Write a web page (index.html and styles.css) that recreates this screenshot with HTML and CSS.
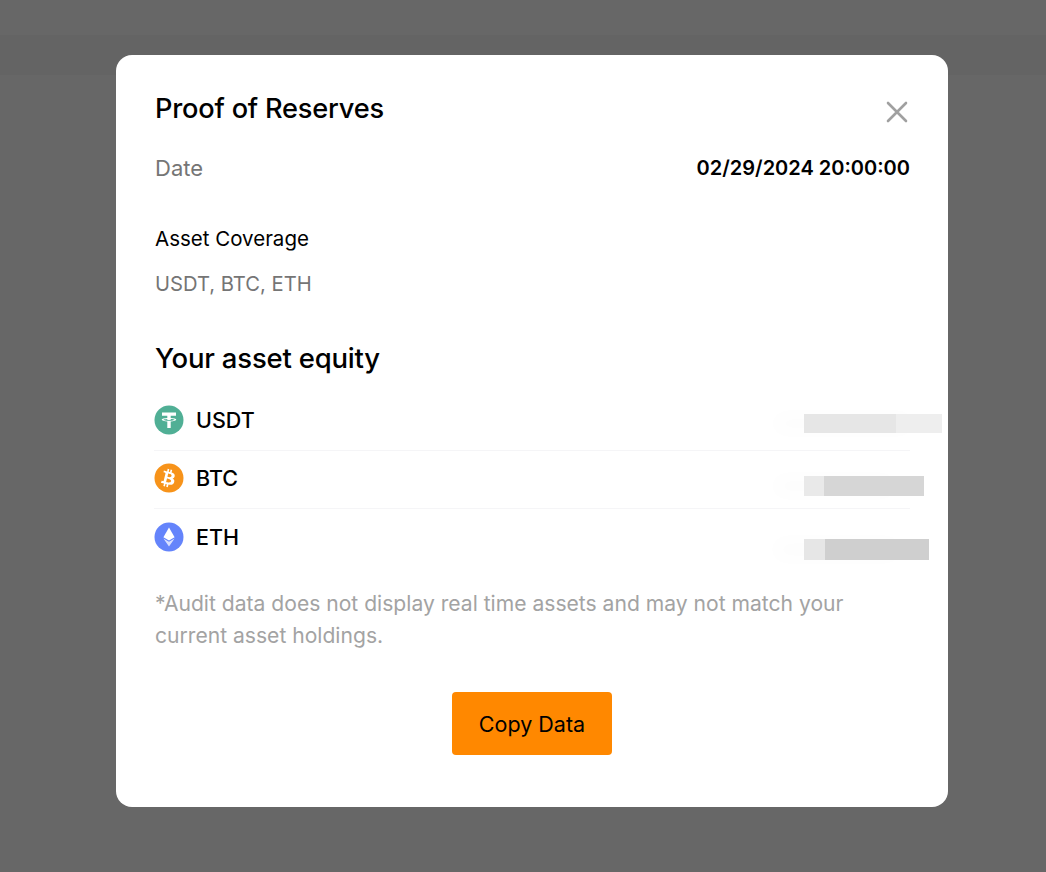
FILE: index.html
```html
<!DOCTYPE html>
<html lang="en">
<head>
<meta charset="utf-8">
<title>Proof of Reserves</title>
<link rel="stylesheet" href="styles.css">
</head>
<body>
<div class="page-band"></div>
<div class="overlay">
  <section class="modal">
    <header class="modal-head">
      <h1 class="title">Proof of Reserves</h1>
      <svg class="close" viewBox="0 0 22 22" width="22" height="22" aria-label="Close"><path d="M2 2 20 20M20 2 2 20"/></svg>
    </header>
    <div class="date-row">
      <span class="muted date-label">Date</span>
      <span class="date">02/29/2024 20:00:00</span>
    </div>
    <div class="coverage-label">Asset Coverage</div>
    <div class="muted coverage">USDT, BTC, ETH</div>
    <h2 class="subtitle">Your asset equity</h2>
    <div class="assets">
      <div class="asset">
        <svg class="coin" viewBox="0 0 30 30" width="30" height="30"><circle cx="15" cy="15" r="14.5" fill="#50af95"/><path fill="#fff" d="M8 7.5h14v3.3h-5.3v2.3c2.9.2 5.6.8 5.6 1.7s-2.7 1.5-5.6 1.7V23h-3.4v-6.5c-2.9-.2-5.6-.8-5.6-1.7s2.7-1.5 5.6-1.7v-2.3H8z"/><path fill="#50af95" d="M13.3 13.9c-2 .1-3.8.5-3.8.9s2.5 1 5.5 1 5.5-.5 5.5-1-1.8-.8-3.8-.9v1.2h-3.4z"/></svg>
        <span class="name">USDT</span>
        <div class="mosaic m-usdt"><i></i><i></i><i></i><i></i><i></i><i></i></div>
      </div>
      <div class="asset">
        <svg class="coin" viewBox="0 0 30 30" width="30" height="30"><circle cx="15" cy="15" r="14.5" fill="#f7931a"/><path fill="#fff" d="M20.7 13.1c.3-1.9-1.2-2.9-3.1-3.6l.6-2.6-1.6-.4-.6 2.5-1.3-.3.6-2.5-1.6-.4-.6 2.6-3.2-.8-.4 1.7 1.2.3c.7.2.8.6.8 1l-1.8 7.1c-.1.2-.3.6-.8.4l-1.2-.3-.8 1.9 3.1.8-.7 2.6 1.6.4.6-2.6 1.3.3-.6 2.6 1.6.4.7-2.6c2.7.5 4.8.3 5.6-2.1.7-2-.1-3.1-1.5-3.9 1.1-.2 1.9-1 2.1-2.5zm-3.7 5.2c-.5 2-3.8.9-4.9.6l.9-3.5c1.1.3 4.5.8 4 2.9zm.5-5.2c-.4 1.8-3.2.9-4.1.7l.8-3.2c.9.2 3.8.6 3.3 2.5z"/></svg>
        <span class="name">BTC</span>
        <div class="mosaic m-btc"><i></i><i></i><i></i><i></i><i></i><i></i></div>
      </div>
      <div class="asset">
        <svg class="coin" viewBox="0 0 30 30" width="30" height="30"><circle cx="15" cy="15" r="14.5" fill="#6484fb"/><path fill="#fff" d="M15 5.5l-5.6 9.7 5.6 3.3 5.6-3.3z"/><path fill="#fff" d="M9.4 16.4 15 24.5l5.6-8.1-5.6 3.3z" opacity=".75"/></svg>
        <span class="name">ETH</span>
        <div class="mosaic m-eth"><i></i><i></i><i></i><i></i><i></i><i></i></div>
      </div>
    </div>
    <p class="note">*Audit data does not display real time assets and may not match your current asset holdings.</p>
    <div class="actions"><button class="copy" type="button">Copy Data</button></div>
  </section>
</div>
</body>
</html>
```

FILE: styles.css
```css
* { box-sizing: border-box; }
html, body { margin: 0; height: 100%; }
body {
  background: #676767;
  font-family: Inter, "Noto Sans", sans-serif;
  color: #000;
  overflow: hidden;
}
.page-band { position: absolute; left: 0; right: 0; top: 35px; height: 40px; background: #646464; }
.overlay {
  position: fixed;
  inset: 0;
  display: flex;
  justify-content: center;
  align-items: flex-start;
  padding: 55px 0 0 18px;
}
.modal {
  width: 832px;
  height: 752px;
  background: #fff;
  border-radius: 16px;
  padding: 0 38px;
  display: flex;
  flex-direction: column;
}
.modal-head {
  display: flex;
  justify-content: space-between;
  align-items: flex-start;
  padding-top: 36px;
  height: 95px;
}
.title { margin: 0 0 0 1px; font-size: 27.2px; line-height: 36px; font-weight: 500; letter-spacing: -0.2px; }
.close { margin: 10px 2px 0 0; fill: none; stroke: #a0a0a0; stroke-width: 2.6; stroke-linecap: round; }
.date-row { display: flex; justify-content: space-between; align-items: center; height: 36px; padding-left: 1px; }
.muted { color: #757575; font-size: 20.2px; }
.date-label { font-size: 22px; }
.date { font-weight: 600; font-size: 20px; }
.coverage-label { margin: 35px 0 0 1px; font-size: 20.5px; line-height: 36px; }
.coverage { margin: 9px 0 0 1px; line-height: 36px; }
.subtitle { margin: 38px 0 0 1px; font-size: 27.5px; line-height: 36px; font-weight: 500; letter-spacing: -0.2px; }
.assets { margin-top: 17px; }
.asset {
  display: flex;
  align-items: center;
  height: 58px;
  padding-bottom: 3px;
  border-bottom: 1px solid #f5f5f7;
}
.asset:last-child { border-bottom: 0; }
.coin { flex: none; margin-right: 12px; }
.name { font-size: 21.5px; font-weight: 500; }
.mosaic { display: flex; margin-left: auto; align-self: flex-start; box-shadow: -30px 0 18px #fdfdfd; }
.mosaic i { display: block; flex: 1; height: 100%; filter: blur(.6px); }
.m-usdt { width: 138px; height: 19px; margin-top: 21px; margin-right: -32px; }
.m-btc { width: 120px; height: 20px; margin-top: 25px; margin-right: -14px; }
.m-eth { width: 125px; height: 21px; margin-top: 30px; margin-right: -19px; }
.m-usdt i { background: #e6e6e6; }
.m-usdt i:nth-child(n+5) { background: #eeeeee; }
.m-btc i { background: #d6d6d6; }
.m-btc i:first-child { background: #e9e9e9; }
.m-eth i { background: #cfcfcf; }
.m-eth i:first-child { background: #e6e6e6; }
.note { margin: 21px 0 0 1px; font-size: 21.1px; line-height: 32px; color: #a3a3a3; }
.actions { display: flex; justify-content: center; margin-top: 40px; }
.copy {
  width: 160px;
  height: 63px;
  border: 0;
  border-radius: 4px;
  background: #ff8800;
  color: #000;
  font: 400 21.5px Inter, "Noto Sans", sans-serif;
}
```
